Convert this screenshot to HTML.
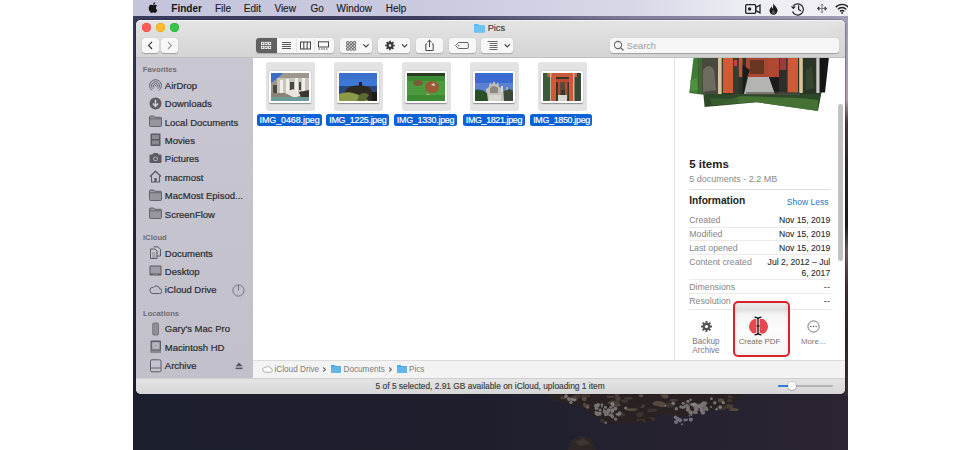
<!DOCTYPE html>
<html><head><meta charset="utf-8"><style>
html,body{margin:0;padding:0;}
body{width:980px;height:450px;position:relative;overflow:hidden;background:#fff;font-family:"Liberation Sans", sans-serif;}
.t{position:absolute;white-space:nowrap;font-family:"Liberation Sans", sans-serif;}
</style></head><body>
<div style="position:absolute;left:133px;top:0px;width:715px;height:450px;background:linear-gradient(90deg,#1c1f2e 0%,#1d1f2d 45%,#262230 75%,#2c2430 100%);"></div><svg style="position:absolute;left:133px;top:380px;" width="715" height="70" viewBox="0 0 715 70"><defs><filter id="bl" x="-20%" y="-20%" width="140%" height="140%"><feGaussianBlur stdDeviation="0.7"/></filter></defs><g transform="translate(-133,-380)" filter="url(#bl)"><path d="M548 394 L552 400 L566 404 L580 406 L592 414 L604 422 L622 424 L644 422 L660 414 L686 416 L714 410 L734 404 L742 394z" fill="#2a2422"/><ellipse cx="610.9" cy="396.7" rx="4.6" ry="1.1" fill="#4a3e38"/><ellipse cx="618.7" cy="395.0" rx="4.0" ry="1.1" fill="#2a2422"/><ellipse cx="628.6" cy="398.3" rx="4.2" ry="1.1" fill="#4a3e38"/><ellipse cx="728.1" cy="405.4" rx="4.3" ry="1.1" fill="#2a2422"/><ellipse cx="559.3" cy="398.0" rx="4.2" ry="1.3" fill="#2a2422"/><ellipse cx="577.1" cy="396.1" rx="3.2" ry="2.6" fill="#3e3430"/><ellipse cx="585.3" cy="395.8" rx="4.8" ry="2.1" fill="#3e3430"/><ellipse cx="643.3" cy="403.6" rx="5.1" ry="1.9" fill="#2a2422"/><ellipse cx="618.0" cy="398.5" rx="2.7" ry="2.6" fill="#4a3e38"/><ellipse cx="658.0" cy="403.5" rx="5.5" ry="2.5" fill="#56483f"/><ellipse cx="664.5" cy="395.3" rx="4.0" ry="1.3" fill="#56483f"/><ellipse cx="693.7" cy="404.3" rx="5.5" ry="1.6" fill="#56483f"/><ellipse cx="661.7" cy="404.4" rx="3.8" ry="2.7" fill="#56483f"/><ellipse cx="639.1" cy="406.0" rx="2.2" ry="2.4" fill="#2a2422"/><ellipse cx="603.5" cy="400.9" rx="4.7" ry="1.0" fill="#2a2422"/><ellipse cx="616.8" cy="405.0" rx="4.0" ry="1.4" fill="#56483f"/><ellipse cx="574.3" cy="398.5" rx="3.6" ry="2.7" fill="#4a3e38"/><ellipse cx="581.3" cy="401.2" rx="3.1" ry="1.3" fill="#2a2422"/><ellipse cx="712.4" cy="399.0" rx="3.7" ry="1.7" fill="#2a2422"/><ellipse cx="730.1" cy="396.7" rx="2.7" ry="1.5" fill="#3e3430"/><ellipse cx="584.3" cy="399.1" rx="2.6" ry="2.1" fill="#56483f"/><ellipse cx="729.2" cy="406.4" rx="4.1" ry="2.2" fill="#4a3e38"/><ellipse cx="635.8" cy="409.7" rx="5.8" ry="2.4" fill="#2a2422"/><ellipse cx="624.8" cy="401.1" rx="3.9" ry="1.8" fill="#3e3430"/><ellipse cx="562.7" cy="397.8" rx="2.6" ry="1.7" fill="#4a3e38"/><ellipse cx="650.9" cy="411.1" rx="4.5" ry="1.1" fill="#3e3430"/><ellipse cx="665.4" cy="396.7" rx="3.0" ry="1.7" fill="#56483f"/><ellipse cx="639.1" cy="396.1" rx="4.0" ry="3.0" fill="#2a2422"/><ellipse cx="641.0" cy="395.5" rx="2.4" ry="1.7" fill="#56483f"/><ellipse cx="640.0" cy="406.5" rx="4.1" ry="1.4" fill="#56483f"/><ellipse cx="734.0" cy="409.5" rx="4.8" ry="1.5" fill="#56483f"/><ellipse cx="720.8" cy="400.4" rx="2.9" ry="2.1" fill="#56483f"/><ellipse cx="669.7" cy="405.0" rx="5.2" ry="2.5" fill="#3e3430"/><ellipse cx="701.5" cy="408.7" rx="5.0" ry="1.5" fill="#2a2422"/><ellipse cx="616.8" cy="394.5" rx="2.1" ry="1.6" fill="#56483f"/><ellipse cx="586.4" cy="404.9" rx="3.4" ry="2.6" fill="#56483f"/><ellipse cx="729.5" cy="400.6" rx="2.9" ry="1.5" fill="#3e3430"/><ellipse cx="613.5" cy="402.7" rx="5.9" ry="2.2" fill="#4a3e38"/><ellipse cx="640.1" cy="405.8" rx="5.2" ry="1.2" fill="#4a3e38"/><ellipse cx="721.0" cy="408.1" rx="5.0" ry="2.0" fill="#3e3430"/><ellipse cx="631.6" cy="405.4" rx="2.3" ry="2.9" fill="#2a2422"/><ellipse cx="637.1" cy="407.4" rx="2.3" ry="1.3" fill="#3e3430"/><ellipse cx="637.5" cy="405.8" rx="4.4" ry="2.2" fill="#2a2422"/><ellipse cx="673.6" cy="400.3" rx="4.2" ry="1.3" fill="#4a3e38"/><ellipse cx="700.3" cy="407.1" rx="2.4" ry="2.5" fill="#3e3430"/><ellipse cx="631.6" cy="409.7" rx="5.3" ry="1.4" fill="#56483f"/><ellipse cx="590.0" cy="403.0" rx="5.1" ry="1.7" fill="#2a2422"/><ellipse cx="649.2" cy="408.9" rx="3.7" ry="1.9" fill="#2a2422"/><ellipse cx="648.8" cy="420.3" rx="1.9" ry="1.2" fill="#3e3430"/><ellipse cx="651.7" cy="418.9" rx="3.3" ry="1.8" fill="#3e3430"/><ellipse cx="606.2" cy="414.6" rx="3.7" ry="1.6" fill="#2a2422"/><ellipse cx="639.4" cy="415.4" rx="2.9" ry="1.8" fill="#3e3430"/><ellipse cx="611.2" cy="411.9" rx="3.8" ry="1.5" fill="#3e3430"/><ellipse cx="644.4" cy="420.8" rx="2.8" ry="1.6" fill="#3e3430"/><ellipse cx="640.0" cy="414.3" rx="3.1" ry="1.5" fill="#3e3430"/><ellipse cx="640.4" cy="420.3" rx="4.3" ry="1.3" fill="#3e3430"/><ellipse cx="649.6" cy="409.9" rx="1.9" ry="1.4" fill="#3e3430"/><ellipse cx="638.6" cy="414.0" rx="2.1" ry="1.3" fill="#3e3430"/><ellipse cx="653.3" cy="410.2" rx="3.6" ry="1.7" fill="#3e3430"/><ellipse cx="611.5" cy="409.9" rx="2.9" ry="1.7" fill="#3e3430"/><ellipse cx="620.9" cy="414.8" rx="4.5" ry="1.8" fill="#3e3430"/><ellipse cx="640.9" cy="421.9" rx="2.7" ry="1.4" fill="#2a2422"/><ellipse cx="615.7" cy="418.1" rx="1.6" ry="1.6" fill="#2a2422"/><ellipse cx="640.7" cy="413.4" rx="3.1" ry="1.3" fill="#3e3430"/><ellipse cx="602.3" cy="420.9" rx="2.2" ry="1.9" fill="#3e3430"/><ellipse cx="612.3" cy="408.6" rx="3.8" ry="1.3" fill="#3e3430"/><ellipse cx="648.3" cy="419.9" rx="3.5" ry="1.9" fill="#2a2422"/><g fill="#b4b0b4" opacity="0.55"><circle cx="615.6" cy="419.1" r="1.6"/><circle cx="603.9" cy="409.1" r="0.9"/><circle cx="601.8" cy="406.6" r="0.9"/><circle cx="615.5" cy="408.6" r="1.9"/><circle cx="618.6" cy="415.5" r="0.9"/><circle cx="610.7" cy="407.2" r="1.3"/><circle cx="587.7" cy="407.6" r="1.2"/><circle cx="611.7" cy="415.0" r="1.1"/><circle cx="608.7" cy="412.7" r="0.9"/><circle cx="607.1" cy="414.7" r="1.2"/><circle cx="605.4" cy="407.3" r="1.5"/><circle cx="608.2" cy="414.7" r="0.8"/><circle cx="605.0" cy="411.8" r="1.8"/><circle cx="600.1" cy="410.1" r="1.5"/><circle cx="608.5" cy="410.1" r="1.9"/><circle cx="596.5" cy="413.2" r="2.0"/><circle cx="597.6" cy="414.3" r="1.8"/><circle cx="612.3" cy="410.5" r="2.0"/><circle cx="601.9" cy="404.8" r="1.4"/><circle cx="603.5" cy="412.2" r="1.0"/><circle cx="616.9" cy="414.2" r="1.2"/><circle cx="606.7" cy="412.6" r="2.0"/><circle cx="613.2" cy="406.1" r="1.2"/><circle cx="605.3" cy="414.7" r="1.4"/><circle cx="609.8" cy="415.1" r="1.2"/><circle cx="625.8" cy="408.1" r="1.6"/><circle cx="605.7" cy="422.7" r="1.2"/><circle cx="604.8" cy="411.2" r="1.3"/><circle cx="595.7" cy="411.8" r="1.1"/><circle cx="604.2" cy="411.0" r="1.2"/><circle cx="611.8" cy="413.4" r="0.9"/><circle cx="611.7" cy="411.5" r="1.1"/><circle cx="596.6" cy="408.2" r="1.9"/><circle cx="598.0" cy="405.0" r="2.0"/><circle cx="599.5" cy="413.6" r="2.2"/><circle cx="612.6" cy="416.8" r="1.7"/><circle cx="619.6" cy="413.3" r="2.0"/><circle cx="595.9" cy="405.7" r="1.9"/><circle cx="611.2" cy="415.2" r="1.5"/><circle cx="612.4" cy="404.0" r="2.0"/><circle cx="673.3" cy="403.3" r="1.8"/><circle cx="693.7" cy="404.6" r="0.8"/><circle cx="705.2" cy="409.5" r="0.9"/><circle cx="705.5" cy="403.2" r="1.7"/><circle cx="683.2" cy="403.2" r="1.5"/><circle cx="720.2" cy="407.1" r="1.8"/><circle cx="680.9" cy="406.9" r="1.7"/><circle cx="716.4" cy="409.3" r="1.2"/><circle cx="706.1" cy="408.2" r="1.8"/><circle cx="702.9" cy="412.5" r="2.2"/><circle cx="684.2" cy="407.1" r="1.5"/><circle cx="688.0" cy="401.5" r="1.7"/><circle cx="693.7" cy="405.9" r="1.0"/><circle cx="696.5" cy="412.8" r="1.2"/><circle cx="695.1" cy="406.8" r="0.9"/><circle cx="694.7" cy="412.2" r="1.8"/><circle cx="692.1" cy="404.4" r="1.5"/><circle cx="682.8" cy="407.9" r="1.0"/><circle cx="703.8" cy="405.6" r="2.2"/><circle cx="699.2" cy="406.7" r="1.4"/><circle cx="711.5" cy="398.7" r="1.4"/><circle cx="696.0" cy="409.4" r="2.1"/><circle cx="701.2" cy="411.5" r="1.0"/><circle cx="665.2" cy="405.7" r="1.0"/><circle cx="703.6" cy="403.2" r="2.0"/><circle cx="694.3" cy="404.6" r="2.1"/><circle cx="694.1" cy="407.1" r="0.8"/><circle cx="682.8" cy="407.2" r="1.2"/><circle cx="704.6" cy="409.5" r="1.2"/><circle cx="697.4" cy="406.8" r="1.9"/><circle cx="700.5" cy="405.5" r="2.1"/><circle cx="690.6" cy="399.7" r="1.2"/><circle cx="688.0" cy="409.5" r="2.2"/><circle cx="686.6" cy="405.2" r="1.4"/><circle cx="696.4" cy="408.1" r="0.9"/><circle cx="702.4" cy="404.5" r="2.1"/><circle cx="697.0" cy="409.8" r="1.5"/><circle cx="701.6" cy="410.1" r="2.1"/><circle cx="714.8" cy="402.7" r="1.7"/><circle cx="723.4" cy="402.7" r="1.6"/><circle cx="696.2" cy="405.9" r="1.8"/><circle cx="676.3" cy="408.8" r="1.7"/><circle cx="696.1" cy="408.1" r="2.1"/><circle cx="707.2" cy="409.8" r="1.3"/><circle cx="690.7" cy="412.5" r="2.2"/><circle cx="695.8" cy="412.1" r="1.2"/><circle cx="684.8" cy="405.8" r="1.0"/><circle cx="701.7" cy="409.0" r="2.1"/><circle cx="687.8" cy="407.0" r="2.1"/><circle cx="711.2" cy="406.9" r="1.0"/><circle cx="684.7" cy="419.8" r="1.3"/><circle cx="686.8" cy="419.8" r="1.2"/><circle cx="675.5" cy="417.2" r="1.8"/><circle cx="680.0" cy="420.1" r="1.5"/><circle cx="681.1" cy="420.3" r="0.9"/><circle cx="682.0" cy="424.2" r="1.0"/><circle cx="677.7" cy="418.9" r="2.0"/><circle cx="684.8" cy="420.6" r="1.1"/><circle cx="680.0" cy="420.3" r="2.1"/><circle cx="689.3" cy="415.7" r="0.8"/><circle cx="690.9" cy="419.6" r="2.1"/><circle cx="678.1" cy="419.4" r="0.8"/><circle cx="676.0" cy="421.9" r="2.0"/><circle cx="691.4" cy="414.8" r="1.1"/><circle cx="571.8" cy="399.5" r="1.5"/><circle cx="566.1" cy="395.7" r="1.8"/><circle cx="565.9" cy="397.0" r="1.4"/><circle cx="568.9" cy="398.9" r="1.9"/><circle cx="571.0" cy="402.4" r="1.7"/><circle cx="569.3" cy="399.7" r="1.2"/><circle cx="565.9" cy="397.2" r="1.0"/><circle cx="574.4" cy="399.8" r="1.6"/></g><path d="M568 450 L571 441 L580 436 L591 438 L596 450z" fill="#2e2826"/><path d="M574 442 L584 438 L590 444 L580 446z" fill="#3e3430"/></g></svg><div style="position:absolute;left:133px;top:16px;width:715px;height:6px;background:linear-gradient(90deg,#393b5c 0%,#3e4062 40%,#7f7d9a 70%,#a09db5 100%);"></div><div style="position:absolute;left:844px;top:16px;width:4px;height:380px;background:linear-gradient(180deg,#a09eb6 0%,#b09cac 22%,#4a3a3a 28%,#2e2424 40%,#1e1a1a 55%,#6a5866 62%,#3a2c30 72%,#2e2428 85%,#3a2e36 100%);"></div><div style="position:absolute;left:133px;top:16px;width:4px;height:380px;background:linear-gradient(180deg,#393b5c 0%,#2a2c46 30%,#1c1e30 100%);"></div><div style="position:absolute;left:133px;top:0px;width:715px;height:16px;background:linear-gradient(90deg,#c4c5dc 0%,#c9cade 40%,#d8d8e8 70%,#ececf3 85%,#f0f0f5 100%);"></div><svg style="position:absolute;left:145px;top:1px;" width="14" height="15" viewBox="0 0 14 15"><g transform="translate(2.77,0.72) scale(0.58)"><path d="M14.1 10.6c-0.02-2.3 1.9-3.4 2-3.5c-1.1-1.6-2.8-1.8-3.4-1.8c-1.4-0.15-2.8 0.85-3.5 0.85c-0.7 0-1.85-0.83-3.05-0.8c-1.55 0.02-3 0.9-3.8 2.3c-1.6 2.8-0.4 7 1.2 9.3c0.8 1.1 1.7 2.4 2.9 2.35c1.15-0.05 1.6-0.75 3-0.75c1.4 0 1.8 0.75 3.05 0.72c1.25-0.02 2.05-1.15 2.8-2.27c0.9-1.3 1.25-2.55 1.27-2.6c-0.03-0.01-2.45-0.94-2.47-3.75z M11.8 3.9c0.63-0.77 1.06-1.83 0.94-2.9c-0.91 0.04-2.02 0.61-2.67 1.37c-0.59 0.67-1.1 1.76-0.96 2.8c1.02 0.08 2.05-0.52 2.69-1.27z" fill="#151515"/></g></svg><div class="t" style="left:171.3px;top:3.84px;font-size:10px;line-height:10px;color:#151515;font-weight:700;letter-spacing:0px;">Finder</div><div class="t" style="left:215px;top:3.84px;font-size:10px;line-height:10px;color:#1e1e1e;font-weight:400;letter-spacing:0px;-webkit-text-stroke:0.15px #1e1e1e;">File</div><div class="t" style="left:243.8px;top:3.84px;font-size:10px;line-height:10px;color:#1e1e1e;font-weight:400;letter-spacing:0px;-webkit-text-stroke:0.15px #1e1e1e;">Edit</div><div class="t" style="left:274.4px;top:3.84px;font-size:10px;line-height:10px;color:#1e1e1e;font-weight:400;letter-spacing:0px;-webkit-text-stroke:0.15px #1e1e1e;">View</div><div class="t" style="left:310.5px;top:3.84px;font-size:10px;line-height:10px;color:#1e1e1e;font-weight:400;letter-spacing:0px;-webkit-text-stroke:0.15px #1e1e1e;">Go</div><div class="t" style="left:336.5px;top:3.84px;font-size:10px;line-height:10px;color:#1e1e1e;font-weight:400;letter-spacing:0px;-webkit-text-stroke:0.15px #1e1e1e;">Window</div><div class="t" style="left:385.8px;top:3.84px;font-size:10px;line-height:10px;color:#1e1e1e;font-weight:400;letter-spacing:0px;-webkit-text-stroke:0.15px #1e1e1e;">Help</div><svg style="position:absolute;left:745px;top:4px;" width="16" height="10" viewBox="0 0 16 10"><rect x="0.7" y="0.7" width="10" height="8.6" rx="1" fill="none" stroke="#222" stroke-width="1.3"/><circle cx="4.6" cy="5" r="1.7" fill="#222"/><path d="M10.7 3.5 L15 1.2 V8.8 L10.7 6.5z" fill="none" stroke="#222" stroke-width="1.3"/></svg><svg style="position:absolute;left:769px;top:3px;" width="9" height="12" viewBox="0 0 9 12"><path d="M4.5 0.3 C5 2.5 8.5 4.5 8.5 7.8 C8.5 10.2 6.7 11.7 4.5 11.7 C2.3 11.7 0.5 10.2 0.5 7.8 C0.5 5.8 2 4.5 2.8 3.4 C3 4.8 3.5 5.5 4 5.8 C4 4 4.2 2 4.5 0.3z" fill="#1a1a1a"/><path d="M4.5 6.5 C5.5 7.5 6.3 8.3 6.3 9.5 C6.3 10.5 5.5 11.1 4.5 11.1 C3.5 11.1 2.7 10.5 2.7 9.5 C2.7 8.5 3.6 7.6 4.5 6.5z" fill="#555"/></svg><svg style="position:absolute;left:790px;top:2px;" width="15" height="14" viewBox="0 0 15 14"><path d="M3.2 4.2 A5.6 5.6 0 1 1 2.5 9.5" fill="none" stroke="#222" stroke-width="1.2"/><path d="M0.8 4.5 L3.4 7.2 L5.8 4.5z" fill="#222"/><path d="M8.6 3.5 V7.5 L11 9" fill="none" stroke="#222" stroke-width="1.2"/></svg><svg style="position:absolute;left:817px;top:3px;" width="10" height="11" viewBox="0 0 10 11"><path d="M5 1 V10 M1 5.5 H9" stroke="#777" stroke-width="1"/><path d="M3.8 2.3 L5 1 L6.2 2.3 M3.8 8.7 L5 10 L6.2 8.7" fill="none" stroke="#888" stroke-width="1"/><path d="M2.3 4 L0.8 5.5 L2.3 7 M7.7 4 L9.2 5.5 L7.7 7" fill="none" stroke="#333" stroke-width="1.3"/></svg><svg style="position:absolute;left:835px;top:3px;" width="13" height="11" viewBox="0 0 13 11"><path d="M0.8 4.2 A8.5 8.5 0 0 1 13.5 4.2" fill="none" stroke="#222" stroke-width="1.4"/><path d="M2.9 6.4 A5.6 5.6 0 0 1 11.2 6.4" fill="none" stroke="#222" stroke-width="1.4"/><path d="M5 8.5 A2.6 2.6 0 0 1 9.2 8.5" fill="none" stroke="#222" stroke-width="1.4"/><circle cx="7.1" cy="10" r="0.9" fill="#222"/></svg><div style="position:absolute;left:136px;top:20px;width:709px;height:374px;border-radius:5px;background:#fff;box-shadow:0 0 0 0.6px rgba(20,20,30,0.45);"></div><div style="position:absolute;left:136px;top:58px;width:117px;height:320px;background:linear-gradient(180deg,#c7c6d1 0%,#c4c3ce 50%,#c2c1cb 100%);"></div><div style="position:absolute;left:253px;top:58px;width:421px;height:302px;background:#fff;"></div><div style="position:absolute;left:674px;top:58px;width:171px;height:302px;background:#fff;border-left:1px solid #e2e2e2;box-sizing:border-box;"></div><div style="position:absolute;left:253px;top:360px;width:592px;height:18px;background:#f3f3f3;border-top:1px solid #dcdcdc;box-sizing:border-box;"></div><div style="position:absolute;left:136px;top:378px;width:709px;height:16px;background:linear-gradient(180deg,#e4e4e4 0%,#d6d6d6 100%);border-top:1px solid #cfcfcf;box-sizing:border-box;border-radius:0 0 5px 5px;"></div><div style="position:absolute;left:136px;top:20px;width:709px;height:38px;background:radial-gradient(ellipse 70px 22px at 760px 12px,rgba(215,180,160,0.35),rgba(215,180,160,0)),linear-gradient(180deg,#e4e4e4 0%,#dcdcdc 50%,#d4d4d4 100%);border-bottom:1px solid #c0c0c0;box-shadow:inset 0 1px 0 rgba(255,255,255,0.6);box-sizing:border-box;border-radius:5px 5px 0 0;"></div><div style="position:absolute;left:141.8px;top:23.0px;width:9.4px;height:9.4px;border-radius:50%;background:#fc5c55;box-shadow:inset 0 0 0 0.5px #de4640;"></div><div style="position:absolute;left:155.9px;top:23.0px;width:9.4px;height:9.4px;border-radius:50%;background:#fdbb2e;box-shadow:inset 0 0 0 0.5px #dd9f22;"></div><div style="position:absolute;left:169.9px;top:23.0px;width:9.4px;height:9.4px;border-radius:50%;background:#33c748;box-shadow:inset 0 0 0 0.5px #27a83a;"></div><div style="position:absolute;left:142.3px;top:38px;width:17px;height:14.8px;background:#f7f7f7;border-radius:3px;box-shadow:0 0.5px 0.8px rgba(0,0,0,0.25);"></div><div style="position:absolute;left:161px;top:38px;width:16.7px;height:14.8px;background:#f7f7f7;border-radius:3px;box-shadow:0 0.5px 0.8px rgba(0,0,0,0.25);"></div><svg style="position:absolute;left:142.3px;top:38px;" width="17" height="15" viewBox="0 0 17 15"><path d="M10 3.8 L6.6 7.4 L10 11" fill="none" stroke="#3a3a3a" stroke-width="1.2"/></svg><svg style="position:absolute;left:161px;top:38px;" width="17" height="15" viewBox="0 0 17 15"><path d="M7 3.8 L10.4 7.4 L7 11" fill="none" stroke="#9a9a9a" stroke-width="1.2"/></svg><svg style="position:absolute;left:473.7px;top:24.3px;" width="11" height="8.5" viewBox="0 0 11 8.5"><path d="M0 1.2 Q0 0 1.2 0 H4 L5 1.3 H9.8 Q11 1.3 11 2.5 V7.3 Q11 8.5 9.8 8.5 H1.2 Q0 8.5 0 7.3z" fill="#5bb8f0"/><rect x="0" y="2.2" width="11" height="6.3" rx="1" fill="#6ec3f5"/></svg><div class="t" style="left:487.7px;top:24.21px;font-size:9.2px;line-height:9.2px;color:#3a3a3a;font-weight:400;letter-spacing:0px;-webkit-text-stroke:0.15px #3a3a3a;">Pics</div><div style="position:absolute;left:256.3px;top:37.8px;width:77.4px;height:15px;background:#f7f7f7;border-radius:3px;box-shadow:0 0.5px 1px rgba(0,0,0,0.2);"></div><div style="position:absolute;left:256.3px;top:37.8px;width:20.3px;height:15px;background:#606060;border-radius:3px 0 0 3px;"></div><div style="position:absolute;left:295.7px;top:38.8px;width:0.6px;height:13px;background:#e4e4e4;"></div><div style="position:absolute;left:314.3px;top:38.8px;width:0.6px;height:13px;background:#e4e4e4;"></div><svg style="position:absolute;left:256.3px;top:37.8px;" width="20" height="15" viewBox="0 0 20 15"><g fill="none" stroke="#f4f4f4" stroke-width="0.9"><rect x="5.5" y="4.3" width="2.2" height="2.2"/><rect x="9" y="4.3" width="2.2" height="2.2"/><rect x="12.5" y="4.3" width="2.2" height="2.2"/><rect x="5.5" y="8.3" width="2.2" height="2.2"/><rect x="9" y="8.3" width="2.2" height="2.2"/><rect x="12.5" y="8.3" width="2.2" height="2.2"/></g></svg><svg style="position:absolute;left:276.6px;top:37.8px;" width="19" height="15" viewBox="0 0 19 15"><g stroke="#444" stroke-width="0.9"><path d="M5 4.5 H14 M5 6.5 H14 M5 8.5 H14 M5 10.5 H14"/></g></svg><svg style="position:absolute;left:295.7px;top:37.8px;" width="19" height="15" viewBox="0 0 19 15"><g fill="none" stroke="#444" stroke-width="1"><rect x="4.5" y="4" width="10" height="7"/><path d="M7.8 4 V11 M11.2 4 V11"/></g></svg><svg style="position:absolute;left:314.3px;top:37.8px;" width="19" height="15" viewBox="0 0 19 15"><g fill="none" stroke="#444" stroke-width="1"><rect x="4.5" y="3.8" width="10" height="5.2"/><path d="M4.5 11 H14.5" stroke-dasharray="1.5 1"/></g></svg><div style="position:absolute;left:340px;top:37.8px;width:32px;height:15px;background:#f7f7f7;border-radius:3px;box-shadow:0 0.5px 1px rgba(0,0,0,0.2);"></div><svg style="position:absolute;left:340px;top:37.8px;" width="32" height="15" viewBox="0 0 32 15"><g fill="none" stroke="#4e4e4e" stroke-width="0.9"><rect x="6.6" y="3.6" width="2.4" height="2.4" rx="0.5"/><rect x="9.9" y="3.6" width="2.4" height="2.4" rx="0.5"/><rect x="13.2" y="3.6" width="2.4" height="2.4" rx="0.5"/><rect x="6.6" y="6.7" width="2.4" height="2.4" rx="0.5"/><rect x="9.9" y="6.7" width="2.4" height="2.4" rx="0.5"/><rect x="13.2" y="6.7" width="2.4" height="2.4" rx="0.5"/><rect x="6.6" y="9.8" width="2.4" height="2.4" rx="0.5"/><rect x="9.9" y="9.8" width="2.4" height="2.4" rx="0.5"/><rect x="13.2" y="9.8" width="2.4" height="2.4" rx="0.5"/></g><path d="M23.3 6.3 L26 9 L28.7 6.3" fill="none" stroke="#444" stroke-width="1.2"/></svg><div style="position:absolute;left:378px;top:37.8px;width:32px;height:15px;background:#f7f7f7;border-radius:3px;box-shadow:0 0.5px 1px rgba(0,0,0,0.2);"></div><svg style="position:absolute;left:378px;top:37.8px;" width="32" height="15" viewBox="0 0 32 15"><g transform="translate(12,7.5)"><circle r="3.4" fill="#3a3a3a"/><g stroke="#3a3a3a" stroke-width="1.7"><path d="M0 -4.8 V4.8 M-4.8 0 H4.8 M-3.4 -3.4 L3.4 3.4 M-3.4 3.4 L3.4 -3.4"/></g><circle r="1.2" fill="#f8f8f8"/></g><path d="M24 6.3 L26.6 9 L29.2 6.3" fill="none" stroke="#444" stroke-width="1.2"/></svg><div style="position:absolute;left:416.3px;top:37.8px;width:26.6px;height:15px;background:#f7f7f7;border-radius:3px;box-shadow:0 0.5px 1px rgba(0,0,0,0.2);"></div><svg style="position:absolute;left:416.3px;top:37.8px;" width="27" height="15" viewBox="0 0 27 15"><g fill="none" stroke="#444" stroke-width="1"><path d="M11 6 H9.8 V12.5 H17.2 V6 H16"/><path d="M13.5 2.2 V9 M11.3 4.3 L13.5 2.2 L15.7 4.3"/></g></svg><div style="position:absolute;left:449px;top:37.8px;width:26.7px;height:15px;background:#f7f7f7;border-radius:3px;box-shadow:0 0.5px 1px rgba(0,0,0,0.2);"></div><svg style="position:absolute;left:449px;top:37.8px;" width="27" height="15" viewBox="0 0 27 15"><path d="M9.5 4.5 H18 Q19.3 4.5 19.3 5.8 V9.2 Q19.3 10.5 18 10.5 H9.5 L6.5 7.5z" fill="none" stroke="#555" stroke-width="0.9"/><circle cx="9.6" cy="7.5" r="0.7" fill="#555"/></svg><div style="position:absolute;left:481.4px;top:37.8px;width:32px;height:15px;background:#f7f7f7;border-radius:3px;box-shadow:0 0.5px 1px rgba(0,0,0,0.2);"></div><svg style="position:absolute;left:481.4px;top:38px;" width="32" height="15" viewBox="0 0 32 15"><g stroke="#5a5a5a" stroke-width="0.9"><path d="M6.6 3.5 H16.6 M8.6 5.5 H16.6 M8.6 7.5 H16.6 M8.6 9.5 H16.6 M8.6 11.5 H16.6"/></g><path d="M23.6 6.3 L26.2 9 L28.8 6.3" fill="none" stroke="#444" stroke-width="1.2"/></svg><div style="position:absolute;left:610.2px;top:38.2px;width:229px;height:14.8px;background:#f6f6f6;border-radius:3px;box-shadow:0 0.5px 0.8px rgba(0,0,0,0.25);"></div><svg style="position:absolute;left:613px;top:39.5px;" width="12" height="12" viewBox="0 0 12 12"><circle cx="5" cy="5" r="3.6" fill="none" stroke="#666" stroke-width="1.1"/><path d="M7.6 7.6 L10.5 10.5" stroke="#666" stroke-width="1.2"/></svg><div class="t" style="left:626.8px;top:41.51px;font-size:9.2px;line-height:9.2px;color:#9c9c9c;font-weight:400;letter-spacing:0px;">Search</div><div class="t" style="left:142.8px;top:66.32px;font-size:7.65px;line-height:7.65px;color:#6d6c74;font-weight:700;letter-spacing:0px;">Favorites</div><div class="t" style="left:143px;top:233.62px;font-size:7.65px;line-height:7.65px;color:#6d6c74;font-weight:700;letter-spacing:0px;">iCloud</div><div class="t" style="left:143px;top:309.62px;font-size:7.65px;line-height:7.65px;color:#6d6c74;font-weight:700;letter-spacing:0px;">Locations</div><svg style="position:absolute;left:149px;top:78.60000000000001px;" width="13" height="14" viewBox="0 0 13 14"><path d="M3.12 11.43 A5.90 5.90 0 1 1 9.88 11.43 M4.26 9.79 A3.90 3.90 0 1 1 8.74 9.79 M5.35 8.24 A2.00 2.00 0 1 1 7.65 8.24" fill="none" stroke="#5c5b63" stroke-width="0.95"/><circle cx="6.5" cy="6.6" r="0.7" fill="#5c5b63"/></svg><div class="t" style="left:164.8px;top:81.16px;font-size:9.5px;line-height:9.5px;color:#2b2b30;font-weight:400;letter-spacing:0px;-webkit-text-stroke:0.2px #2b2b30;">AirDrop</div><svg style="position:absolute;left:149px;top:96.9px;" width="13" height="14" viewBox="0 0 13 14"><circle cx="6.5" cy="6.5" r="6" fill="#5c5b63"/><path d="M6.5 2.8 V8.8 M3.8 6.5 L6.5 9.3 L9.2 6.5" fill="none" stroke="#cfcfd8" stroke-width="1.5"/></svg><div class="t" style="left:164.8px;top:99.46px;font-size:9.5px;line-height:9.5px;color:#2b2b30;font-weight:400;letter-spacing:0px;-webkit-text-stroke:0.2px #2b2b30;">Downloads</div><svg style="position:absolute;left:149px;top:115.2px;" width="13" height="14" viewBox="0 0 13 14"><path d="M0.5 2 Q0.5 1 1.5 1 H4.8 L6 2.3 H11.5 Q12.5 2.3 12.5 3.3 V10.5 Q12.5 11.5 11.5 11.5 H1.5 Q0.5 11.5 0.5 10.5z" fill="#97969f" stroke="#5c5b63" stroke-width="0.9"/><path d="M0.5 3.8 H12.5" stroke="#5c5b63" stroke-width="0.8"/></svg><div class="t" style="left:164.8px;top:117.76px;font-size:9.5px;line-height:9.5px;color:#2b2b30;font-weight:400;letter-spacing:0px;-webkit-text-stroke:0.2px #2b2b30;">Local Documents</div><svg style="position:absolute;left:149px;top:133.20000000000002px;" width="13" height="14" viewBox="0 0 13 14"><rect x="1.5" y="0.5" width="10" height="12.5" rx="1" fill="#5c5b63"/><rect x="3" y="2" width="7" height="4" fill="#8c8b94"/><rect x="3" y="7.5" width="7" height="4" fill="#8c8b94"/></svg><div class="t" style="left:164.8px;top:135.76px;font-size:9.5px;line-height:9.5px;color:#2b2b30;font-weight:400;letter-spacing:0px;-webkit-text-stroke:0.2px #2b2b30;">Movies</div><svg style="position:absolute;left:149px;top:151.8px;" width="13" height="14" viewBox="0 0 13 14"><path d="M0.5 3.5 Q0.5 2.5 1.5 2.5 H3.5 L4.5 1 H8.5 L9.5 2.5 H11.5 Q12.5 2.5 12.5 3.5 V10 Q12.5 11 11.5 11 H1.5 Q0.5 11 0.5 10z" fill="#5c5b63"/><circle cx="6.5" cy="6.8" r="2.4" fill="#b8b7c2"/><circle cx="6.5" cy="6.8" r="1.5" fill="#5c5b63"/></svg><div class="t" style="left:164.8px;top:154.36px;font-size:9.5px;line-height:9.5px;color:#2b2b30;font-weight:400;letter-spacing:0px;-webkit-text-stroke:0.2px #2b2b30;">Pictures</div><svg style="position:absolute;left:149px;top:170.1px;" width="13" height="14" viewBox="0 0 13 14"><path d="M1 6.5 L6.5 1.2 L12 6.5" fill="none" stroke="#5c5b63" stroke-width="1.2"/><path d="M2.5 5.5 V12 H10.5 V5.5" fill="none" stroke="#5c5b63" stroke-width="1.1"/><rect x="5.3" y="8" width="2.4" height="4" fill="#5c5b63"/></svg><div class="t" style="left:164.8px;top:172.66px;font-size:9.5px;line-height:9.5px;color:#2b2b30;font-weight:400;letter-spacing:0px;-webkit-text-stroke:0.2px #2b2b30;">macmost</div><svg style="position:absolute;left:149px;top:188.70000000000002px;" width="13" height="14" viewBox="0 0 13 14"><path d="M0.5 2 Q0.5 1 1.5 1 H4.8 L6 2.3 H11.5 Q12.5 2.3 12.5 3.3 V10.5 Q12.5 11.5 11.5 11.5 H1.5 Q0.5 11.5 0.5 10.5z" fill="#97969f" stroke="#5c5b63" stroke-width="0.9"/><path d="M0.5 3.8 H12.5" stroke="#5c5b63" stroke-width="0.8"/></svg><div class="t" style="left:164.8px;top:191.26px;font-size:9.5px;line-height:9.5px;color:#2b2b30;font-weight:400;letter-spacing:0px;-webkit-text-stroke:0.2px #2b2b30;">MacMost Episod...</div><svg style="position:absolute;left:149px;top:207.20000000000002px;" width="13" height="14" viewBox="0 0 13 14"><path d="M0.5 2 Q0.5 1 1.5 1 H4.8 L6 2.3 H11.5 Q12.5 2.3 12.5 3.3 V10.5 Q12.5 11.5 11.5 11.5 H1.5 Q0.5 11.5 0.5 10.5z" fill="#97969f" stroke="#5c5b63" stroke-width="0.9"/><path d="M0.5 3.8 H12.5" stroke="#5c5b63" stroke-width="0.8"/></svg><div class="t" style="left:164.8px;top:209.76px;font-size:9.5px;line-height:9.5px;color:#2b2b30;font-weight:400;letter-spacing:0px;-webkit-text-stroke:0.2px #2b2b30;">ScreenFlow</div><svg style="position:absolute;left:149px;top:246.00000000000003px;" width="13" height="14" viewBox="0 0 13 14"><path d="M1.5 3 H6 L8 5 V12.5 H1.5z" fill="#c8c7d1" stroke="#5c5b63" stroke-width="1"/><path d="M4.5 0.8 H9 L11.5 3.3 V10 H8" fill="none" stroke="#5c5b63" stroke-width="1"/><path d="M3 7 H6.5 M3 9 H6.5 M3 11 H6.5" stroke="#5c5b63" stroke-width="0.6"/></svg><div class="t" style="left:164.8px;top:248.56px;font-size:9.5px;line-height:9.5px;color:#2b2b30;font-weight:400;letter-spacing:0px;-webkit-text-stroke:0.2px #2b2b30;">Documents</div><svg style="position:absolute;left:149px;top:264.4px;" width="13" height="14" viewBox="0 0 13 14"><rect x="0.5" y="1.5" width="12" height="10" rx="1.2" fill="#5c5b63"/><rect x="1.5" y="2.5" width="10" height="7" fill="#9d9ca6"/><path d="M4 10.5 H9" stroke="#b8b7c2" stroke-width="0.6" stroke-dasharray="0.8 0.8"/></svg><div class="t" style="left:164.8px;top:266.96px;font-size:9.5px;line-height:9.5px;color:#2b2b30;font-weight:400;letter-spacing:0px;-webkit-text-stroke:0.2px #2b2b30;">Desktop</div><svg style="position:absolute;left:149px;top:282.79999999999995px;" width="13" height="14" viewBox="0 0 13 14"><path d="M3.2 10.5 H10.5 A2.4 2.4 0 0 0 10.6 5.7 A3.2 3.2 0 0 0 4.6 4.6 A2.6 2.6 0 0 0 1 7.5 A3 3 0 0 0 3.2 10.5z" fill="none" stroke="#5c5b63" stroke-width="1"/></svg><div class="t" style="left:164.8px;top:285.36px;font-size:9.5px;line-height:9.5px;color:#2b2b30;font-weight:400;letter-spacing:0px;-webkit-text-stroke:0.2px #2b2b30;">iCloud Drive</div><svg style="position:absolute;left:149px;top:321.79999999999995px;" width="13" height="14" viewBox="0 0 13 14"><rect x="3.2" y="0.5" width="6.8" height="13" rx="2" fill="#77767e"/><rect x="4.2" y="1.5" width="4.8" height="11" rx="1.5" fill="#8e8d95"/></svg><div class="t" style="left:164.8px;top:324.36px;font-size:9.5px;line-height:9.5px;color:#2b2b30;font-weight:400;letter-spacing:0px;-webkit-text-stroke:0.2px #2b2b30;">Gary's Mac Pro</div><svg style="position:absolute;left:149px;top:340.4px;" width="13" height="14" viewBox="0 0 13 14"><rect x="1.5" y="0.5" width="10.5" height="12.5" rx="1" fill="#5c5b63"/><rect x="2.8" y="2" width="8" height="7.5" fill="#a9a8b2"/><circle cx="6.8" cy="5.7" r="2.2" fill="none" stroke="#d0d0d8" stroke-width="0.7"/><rect x="1.5" y="10.5" width="10.5" height="2.5" fill="#8a8990"/></svg><div class="t" style="left:164.8px;top:342.96px;font-size:9.5px;line-height:9.5px;color:#2b2b30;font-weight:400;letter-spacing:0px;-webkit-text-stroke:0.2px #2b2b30;">Macintosh HD</div><svg style="position:absolute;left:149px;top:358.79999999999995px;" width="13" height="14" viewBox="0 0 13 14"><rect x="1.5" y="0.8" width="10.5" height="12" rx="1.4" fill="#c5c4ce" stroke="#5c5b63" stroke-width="1"/><path d="M1.8 9 H11.7" stroke="#5c5b63" stroke-width="0.9"/></svg><div class="t" style="left:164.8px;top:361.36px;font-size:9.5px;line-height:9.5px;color:#2b2b30;font-weight:400;letter-spacing:0px;-webkit-text-stroke:0.2px #2b2b30;">Archive</div><svg style="position:absolute;left:231.5px;top:284px;" width="13" height="13" viewBox="0 0 13 13"><circle cx="6.5" cy="6.5" r="5.6" fill="none" stroke="#6d6c74" stroke-width="0.9"/><path d="M6.5 1 V6.5" stroke="#6d6c74" stroke-width="0.9"/></svg><svg style="position:absolute;left:235px;top:362px;" width="8" height="8" viewBox="0 0 8 8"><path d="M0.5 4.2 L4 0.5 L7.5 4.2z" fill="#55545c"/><rect x="0.5" y="5.6" width="7" height="1.5" fill="#55545c"/></svg><div style="position:absolute;left:265.7px;top:62.3px;width:49px;height:49px;background:#e3e3e3;border-radius:2.5px;"></div><div style="position:absolute;left:269.4px;top:71.1px;width:41.4px;height:31.5px;background:#fff;border-radius:1.5px;box-shadow:0 0.3px 1.2px rgba(0,0,0,0.4);"></div><svg style="position:absolute;left:271.2px;top:72.8px;" width="38" height="28" viewBox="0 0 38 28"><defs><filter id="tb0"><feGaussianBlur stdDeviation="0.6"/></filter></defs><g filter="url(#tb0)"><rect width="38" height="28" fill="#9c988e"/><path d="M0 0 H12 L8 4 L0 10z" fill="#3d6cc8"/><rect x="6" y="5" width="32" height="16" fill="#c8c4ba"/><g fill="#f0eee8"><rect x="9" y="7" width="3" height="13"/><rect x="15" y="6" width="3" height="14"/><rect x="24" y="5" width="3" height="15"/><rect x="31" y="5" width="3" height="15"/></g><g fill="#4a4640"><rect x="19" y="9" width="4" height="8"/><rect x="28" y="9" width="2" height="8"/><rect x="2" y="12" width="4" height="8"/></g><path d="M0 20 H38 V24 H0z" fill="#8a8478"/><path d="M14 20 L22 16 L30 22 L24 25z" fill="#e8e4dc"/><path d="M28 19 L38 17 V25 L30 24z" fill="#3a3630"/><rect y="24" width="38" height="4" fill="#6e9a98"/></g></svg><div style="position:absolute;left:256.8px;top:114.4px;width:65.5px;height:11.2px;background:#0b61d6;border-radius:2.5px;"></div><div class="t" style="left:89.57499999999999px;width:400px;text-align:center;top:115.77px;font-size:8.9px;line-height:8.9px;color:#fff;font-weight:400;letter-spacing:-0.05px;-webkit-text-stroke:0.2px #fff;">IMG_0468.jpeg</div><div style="position:absolute;left:333.7px;top:62.3px;width:49px;height:49px;background:#e3e3e3;border-radius:2.5px;"></div><div style="position:absolute;left:337.4px;top:71.1px;width:41.4px;height:31.5px;background:#fff;border-radius:1.5px;box-shadow:0 0.3px 1.2px rgba(0,0,0,0.4);"></div><svg style="position:absolute;left:339.2px;top:72.8px;" width="38" height="28" viewBox="0 0 38 28"><defs><filter id="tb1"><feGaussianBlur stdDeviation="0.6"/></filter></defs><g filter="url(#tb1)"><rect width="38" height="28" fill="#3c78d6"/><rect y="0" width="38" height="6" fill="#3a70cc"/><rect y="13" width="38" height="12" fill="#2a4a7a"/><path d="M4 24 Q6 14 14 13 L22 12 L30 14 Q34 18 36 26 L36 28 H0z" fill="#2e2c24"/><rect x="20" y="9" width="3" height="4" fill="#1e2230"/><path d="M0 28 V21 Q8 18 14 20 Q22 22 30 28z" fill="#8a9a48"/><path d="M20 22 Q26 18 30 22 L26 28 H18z" fill="#5a6a34"/><rect x="33" y="19" width="5" height="9" fill="#1a1e18"/></g></svg><div style="position:absolute;left:326.4px;top:114.4px;width:62.5px;height:11.2px;background:#0b61d6;border-radius:2.5px;"></div><div class="t" style="left:157.78999999999996px;width:400px;text-align:center;top:115.77px;font-size:8.9px;line-height:8.9px;color:#fff;font-weight:400;letter-spacing:-0.28px;-webkit-text-stroke:0.2px #fff;">IMG_1225.jpeg</div><div style="position:absolute;left:401.7px;top:62.3px;width:49px;height:49px;background:#e3e3e3;border-radius:2.5px;"></div><div style="position:absolute;left:405.4px;top:71.1px;width:41.4px;height:31.5px;background:#fff;border-radius:1.5px;box-shadow:0 0.3px 1.2px rgba(0,0,0,0.4);"></div><svg style="position:absolute;left:407.2px;top:72.8px;" width="38" height="28" viewBox="0 0 38 28"><defs><filter id="tb2"><feGaussianBlur stdDeviation="0.6"/></filter></defs><g filter="url(#tb2)"><rect width="38" height="28" fill="#4c9a3c"/><rect y="0" width="38" height="3" fill="#2a3a26"/><rect y="3" width="38" height="5" fill="#3e8a34"/><ellipse cx="11" cy="10" rx="5" ry="3" fill="#7a5a3a"/><ellipse cx="25" cy="14" rx="7" ry="6" fill="#9a5a34"/><path d="M24 12 L27 10 L28 13z" fill="#e8e0d0"/><path d="M20 20 L24 22 L18 24z" fill="#b89a6a"/><rect y="22" width="38" height="6" fill="#3e8a36"/></g></svg><div style="position:absolute;left:393.9px;top:114.4px;width:63.0px;height:11.2px;background:#0b61d6;border-radius:2.5px;"></div><div class="t" style="left:225.52499999999998px;width:400px;text-align:center;top:115.77px;font-size:8.9px;line-height:8.9px;color:#fff;font-weight:400;letter-spacing:-0.25px;-webkit-text-stroke:0.2px #fff;">IMG_1330.jpeg</div><div style="position:absolute;left:469.7px;top:62.3px;width:49px;height:49px;background:#e3e3e3;border-radius:2.5px;"></div><div style="position:absolute;left:473.4px;top:71.1px;width:41.4px;height:31.5px;background:#fff;border-radius:1.5px;box-shadow:0 0.3px 1.2px rgba(0,0,0,0.4);"></div><svg style="position:absolute;left:475.2px;top:72.8px;" width="38" height="28" viewBox="0 0 38 28"><defs><filter id="tb3"><feGaussianBlur stdDeviation="0.6"/></filter></defs><g filter="url(#tb3)"><rect width="38" height="28" fill="#3a6ad0"/><rect y="10" width="38" height="8" fill="#5a80d0"/><path d="M10 28 L11 16 L14 14 L15 9 L17 12 L19 8 L21 12 L23 9 L24 14 L28 16 L29 28z" fill="#c4c2ba"/><path d="M15 15 Q19 11 23 15 L23 20 L15 20z" fill="#8a8880"/><rect x="26" y="13" width="2" height="6" fill="#d8d6d0"/><rect x="31" y="14" width="2" height="6" fill="#a8a8b0"/><path d="M0 17 Q6 15 12 20 L13 28 H0z" fill="#2a5028"/><path d="M29 18 L35 16 L38 18 V28 H29z" fill="#3a4a3a"/><rect x="14" y="22" width="12" height="6" fill="#d8d6cc"/></g></svg><div style="position:absolute;left:462.9px;top:114.4px;width:61.700000000000045px;height:11.2px;background:#0b61d6;border-radius:2.5px;"></div><div class="t" style="left:293.925px;width:400px;text-align:center;top:115.77px;font-size:8.9px;line-height:8.9px;color:#fff;font-weight:400;letter-spacing:-0.35px;-webkit-text-stroke:0.2px #fff;">IMG_1821.jpeg</div><div style="position:absolute;left:537.7px;top:62.3px;width:49px;height:49px;background:#e3e3e3;border-radius:2.5px;"></div><div style="position:absolute;left:541.4000000000001px;top:71.1px;width:41.4px;height:31.5px;background:#fff;border-radius:1.5px;box-shadow:0 0.3px 1.2px rgba(0,0,0,0.4);"></div><svg style="position:absolute;left:543.2px;top:72.8px;" width="38" height="28" viewBox="0 0 38 28"><defs><filter id="tb4"><feGaussianBlur stdDeviation="0.6"/></filter></defs><g filter="url(#tb4)"><rect width="38" height="28" fill="#2e3a2c"/><rect x="0" y="0" width="8" height="28" fill="#3a5a3a"/><rect x="30" y="0" width="8" height="28" fill="#3a4a38"/><rect x="4" y="0" width="30" height="4" fill="#c85a3a"/><rect x="9" y="3" width="4" height="25" fill="#d2583a"/><rect x="26" y="3" width="4" height="25" fill="#d2583a"/><rect x="13" y="6" width="13" height="3" fill="#c04a30"/><rect x="15" y="8" width="2.5" height="18" fill="#b84a30"/><rect x="22" y="8" width="2.5" height="18" fill="#b84a30"/><rect x="17.5" y="9" width="4.5" height="8" fill="#5a4a3a"/><rect x="15" y="22" width="9" height="6" fill="#d8d4d0"/><rect x="7" y="0" width="1.5" height="28" fill="#c8b89a"/><rect x="30" y="0" width="1.5" height="28" fill="#c8b89a"/></g></svg><div style="position:absolute;left:530.3px;top:114.4px;width:62.200000000000045px;height:11.2px;background:#0b61d6;border-radius:2.5px;"></div><div class="t" style="left:361.54999999999995px;width:400px;text-align:center;top:115.77px;font-size:8.9px;line-height:8.9px;color:#fff;font-weight:400;letter-spacing:-0.3px;-webkit-text-stroke:0.2px #fff;">IMG_1850.jpeg</div><svg style="position:absolute;left:675px;top:58px;" width="163" height="60" viewBox="0 0 163 60"><defs><filter id="pb" x="-5%" y="-5%" width="110%" height="110%"><feGaussianBlur stdDeviation="0.5"/></filter></defs><g transform="translate(-675,-58)" filter="url(#pb)"><path d="M703 90 L822 90 L818 111 L757 102.2 L704.6 107z" fill="#2f4a2a"/><path d="M740 96 L800 98 L818 100 L818 111 L757 102.2 L720 104z" fill="#4a7a3a" opacity="0.8"/><path d="M710 98 L740 99 L735 104 L712 105z" fill="#3a6030" opacity="0.8"/><path d="M693.6 57 L705 57 L705 95 L689.3 93z" fill="#3e7a34"/><path d="M690 80 L697 78 L698 90 L691 91z" fill="#5a9a48" opacity="0.7"/><path d="M815 57 L829 57 L825 92.5 L815 92.5z" fill="#161816"/><rect x="698.5" y="57" width="120" height="37" fill="#2c3428"/><rect x="698.5" y="57" width="4" height="37" fill="#3a6a30"/><rect x="702" y="57" width="16" height="37" fill="#4a4a40"/><path d="M703 70 Q709 62 714 70 L716 90 L703 92z" fill="#6e6c60"/><rect x="718" y="57" width="3.7" height="37" fill="#d8c49a"/><rect x="722.9" y="57" width="10.4" height="36" fill="#cf5a36"/><rect x="733.3" y="57" width="5.5" height="37" fill="#3a3a36"/><rect x="734" y="60" width="3" height="6" fill="#c84048"/><rect x="738.8" y="57" width="3.7" height="20" fill="#b85a36"/><rect x="746" y="57" width="22" height="20" fill="#a84630"/><rect x="750" y="60" width="14" height="14" fill="#6a3424"/><path d="M742.5 94 L742.5 65 L750 70 L746 80 L744 94z" fill="#1e1e1c"/><path d="M744 94 L748 77 L769 77 L775 94z" fill="#b4b4b2"/><path d="M769 65 L780 77 L782 94 L775 94 L769 77z" fill="#1e1e1c"/><rect x="768" y="57" width="11" height="20" fill="#b04a30"/><rect x="779" y="57" width="8.6" height="37" fill="#2e2e2a"/><rect x="779.6" y="57" width="6.7" height="13" fill="#9a3a40"/><rect x="787.6" y="57" width="10.4" height="35.5" fill="#cf5a36"/><rect x="799.2" y="57" width="3.6" height="36" fill="#d8c49a"/><rect x="803" y="57" width="13.3" height="37" fill="#2a3626"/><path d="M806 70 L812 66 L814 88 L806 90z" fill="#3a4a34" opacity="0.8"/><rect x="816.3" y="57" width="3.2" height="36" fill="#c8c8c4"/><path d="M746 92 L800 92 L800 95 L746 95z" fill="#505048" opacity="0.6"/></g></svg><div style="position:absolute;left:838.2px;top:103.6px;width:5px;height:157.4px;background:#c2c2c2;border-radius:2.5px;"></div><div class="t" style="left:689.2px;top:158.97px;font-size:11.5px;line-height:11.5px;color:#1c1c1c;font-weight:700;letter-spacing:0px;">5 items</div><div class="t" style="left:689.2px;top:175.48px;font-size:9px;line-height:9px;color:#8a8a8a;font-weight:400;letter-spacing:0px;">5 documents - 2.2 MB</div><div style="position:absolute;left:689px;top:189px;width:141.5px;height:1px;background:#e0e0e0;"></div><div class="t" style="left:689.2px;top:196.17px;font-size:10.2px;line-height:10.2px;color:#1c1c1c;font-weight:700;letter-spacing:0px;">Information</div><div class="t" style="left:428.4px;width:400px;text-align:right;top:197.60px;font-size:8.5px;line-height:8.5px;color:#2a73c4;font-weight:400;letter-spacing:0px;">Show Less</div><div class="t" style="left:689.2px;top:216.05px;font-size:8.8px;line-height:8.8px;color:#858585;font-weight:400;letter-spacing:0px;">Created</div><div class="t" style="left:430.20000000000005px;width:400px;text-align:right;top:216.22px;font-size:8.6px;line-height:8.6px;color:#2a2a2a;font-weight:400;letter-spacing:0px;-webkit-text-stroke:0.1px #2a2a2a;">Nov 15, 2019</div><div style="position:absolute;left:689px;top:226.8px;width:141.5px;height:1px;background:#ebebeb;"></div><div class="t" style="left:689.2px;top:229.55px;font-size:8.8px;line-height:8.8px;color:#858585;font-weight:400;letter-spacing:0px;">Modified</div><div class="t" style="left:430.20000000000005px;width:400px;text-align:right;top:229.72px;font-size:8.6px;line-height:8.6px;color:#2a2a2a;font-weight:400;letter-spacing:0px;-webkit-text-stroke:0.1px #2a2a2a;">Nov 15, 2019</div><div style="position:absolute;left:689px;top:240.2px;width:141.5px;height:1px;background:#ebebeb;"></div><div class="t" style="left:689.2px;top:244.15px;font-size:8.8px;line-height:8.8px;color:#858585;font-weight:400;letter-spacing:0px;">Last opened</div><div class="t" style="left:430.20000000000005px;width:400px;text-align:right;top:244.32px;font-size:8.6px;line-height:8.6px;color:#2a2a2a;font-weight:400;letter-spacing:0px;-webkit-text-stroke:0.1px #2a2a2a;">Nov 15, 2019</div><div style="position:absolute;left:689px;top:254.4px;width:141.5px;height:1px;background:#ebebeb;"></div><div class="t" style="left:689.2px;top:258.15px;font-size:8.8px;line-height:8.8px;color:#858585;font-weight:400;letter-spacing:0px;">Content created</div><div class="t" style="left:430.20000000000005px;width:400px;text-align:right;top:258.32px;font-size:8.6px;line-height:8.6px;color:#2a2a2a;font-weight:400;letter-spacing:0px;-webkit-text-stroke:0.1px #2a2a2a;">Jul 2, 2012 – Jul</div><div class="t" style="left:430.20000000000005px;width:400px;text-align:right;top:268.72px;font-size:8.6px;line-height:8.6px;color:#2a2a2a;font-weight:400;letter-spacing:0px;-webkit-text-stroke:0.1px #2a2a2a;">6, 2017</div><div style="position:absolute;left:689px;top:279.4px;width:141.5px;height:1px;background:#ebebeb;"></div><div class="t" style="left:689.2px;top:282.75px;font-size:8.8px;line-height:8.8px;color:#858585;font-weight:400;letter-spacing:0px;">Dimensions</div><div class="t" style="left:430.20000000000005px;width:400px;text-align:right;top:282.75px;font-size:8.8px;line-height:8.8px;color:#2a2a2a;font-weight:400;letter-spacing:0.3px;">--</div><div style="position:absolute;left:689px;top:293.2px;width:141.5px;height:1px;background:#ebebeb;"></div><div class="t" style="left:689.2px;top:296.75px;font-size:8.8px;line-height:8.8px;color:#858585;font-weight:400;letter-spacing:0px;">Resolution</div><div class="t" style="left:430.20000000000005px;width:400px;text-align:right;top:296.75px;font-size:8.8px;line-height:8.8px;color:#2a2a2a;font-weight:400;letter-spacing:0.3px;">--</div><div style="position:absolute;left:689px;top:308.5px;width:141.5px;height:1px;background:#e6e6e6;"></div><svg style="position:absolute;left:699.5px;top:319.5px;" width="13" height="13" viewBox="0 0 13 13"><g transform="translate(6.5,6.5)"><circle r="3.8" fill="#555"/><g stroke="#555" stroke-width="2"><path d="M0 -5.5 V5.5 M-5.5 0 H5.5 M-3.9 -3.9 L3.9 3.9 M-3.9 3.9 L3.9 -3.9"/></g><circle r="1.6" fill="#fff"/></g></svg><div class="t" style="left:506px;width:400px;text-align:center;top:337.56px;font-size:8.2px;line-height:8.2px;color:#7a7a7a;font-weight:400;letter-spacing:0px;">Backup</div><div class="t" style="left:506px;width:400px;text-align:center;top:347.16px;font-size:8.2px;line-height:8.2px;color:#7a7a7a;font-weight:400;letter-spacing:0px;">Archive</div><div style="position:absolute;left:732.8px;top:301px;width:57px;height:56px;border:2px solid #d8232c;border-radius:5px;box-sizing:border-box;background:linear-gradient(180deg,#f2f2f2 0%,#dedede 12%,#f4f4f4 22%,#fcfcfc 50%,#f8f8f8 100%);box-shadow:inset 0 0 5px rgba(0,0,0,0.07);"></div><div style="position:absolute;left:748.7px;top:318px;width:19.3px;height:16.8px;border-radius:50%;background:#e9474f;"></div><svg style="position:absolute;left:750.7px;top:315px;" width="14" height="22" viewBox="0 0 14 22"><g fill="none" stroke="#fff" stroke-width="3.2" stroke-linecap="round" opacity="0.9"><path d="M3.5 2.2 Q7 2.2 7 4.6 Q7 2.2 10.5 2.2"/><path d="M7 4.6 V17.4"/><path d="M3.5 19.8 Q7 19.8 7 17.4 Q7 19.8 10.5 19.8"/></g><g fill="none" stroke="#111" stroke-width="1.3"><path d="M3.5 2.2 Q7 2.2 7 4.6 Q7 2.2 10.5 2.2"/><path d="M7 4.6 V17.4"/><path d="M3.5 19.8 Q7 19.8 7 17.4 Q7 19.8 10.5 19.8"/><path d="M5.6 11 H8.4"/></g></svg><div class="t" style="left:559.5px;width:400px;text-align:center;top:337.81px;font-size:7.9px;line-height:7.9px;color:#707070;font-weight:400;letter-spacing:0px;">Create PDF</div><svg style="position:absolute;left:807px;top:320px;" width="13" height="13" viewBox="0 0 13 13"><circle cx="6.5" cy="6.5" r="5.6" fill="none" stroke="#666" stroke-width="0.9"/><circle cx="3.9" cy="6.5" r="0.75" fill="#555"/><circle cx="6.5" cy="6.5" r="0.75" fill="#555"/><circle cx="9.1" cy="6.5" r="0.75" fill="#555"/></svg><div class="t" style="left:613.2px;width:400px;text-align:center;top:337.81px;font-size:7.9px;line-height:7.9px;color:#7a7a7a;font-weight:400;letter-spacing:0px;">More...</div><svg style="position:absolute;left:261.5px;top:364px;" width="11" height="9" viewBox="0 0 11 9"><path d="M2.6 8.2 H8.4 A1.9 1.9 0 0 0 8.5 4.4 A2.6 2.6 0 0 0 3.7 3.5 A2.1 2.1 0 0 0 0.8 5.8 A2.4 2.4 0 0 0 2.6 8.2z" fill="#fafafa" stroke="#a0a0a0" stroke-width="0.8"/></svg><div class="t" style="left:274.5px;top:365.66px;font-size:8.2px;line-height:8.2px;color:#7c7c7c;font-weight:400;letter-spacing:0px;">iCloud Drive</div><svg style="position:absolute;left:322px;top:366px;" width="5" height="7" viewBox="0 0 5 7"><path d="M1.2 1.5 L3.4 3.5 L1.2 5.5" fill="none" stroke="#6a6a6a" stroke-width="1.1"/></svg><svg style="position:absolute;left:330.6px;top:364.5px;" width="10" height="8" viewBox="0 0 10 8"><path d="M0 1 Q0 0 1 0 H3.6 L4.5 1 H9 Q10 1 10 2 V7 Q10 8 9 8 H1 Q0 8 0 7z" fill="#4aa6dc"/><rect x="0" y="2" width="10" height="6" rx="0.8" fill="#62b6e8"/></svg><div class="t" style="left:343.5px;top:365.66px;font-size:8.2px;line-height:8.2px;color:#7c7c7c;font-weight:400;letter-spacing:0px;">Documents</div><svg style="position:absolute;left:387.5px;top:366px;" width="5" height="7" viewBox="0 0 5 7"><path d="M1.2 1.5 L3.4 3.5 L1.2 5.5" fill="none" stroke="#6a6a6a" stroke-width="1.1"/></svg><svg style="position:absolute;left:396.5px;top:364.5px;" width="10" height="8" viewBox="0 0 10 8"><path d="M0 1 Q0 0 1 0 H3.6 L4.5 1 H9 Q10 1 10 2 V7 Q10 8 9 8 H1 Q0 8 0 7z" fill="#4aa6dc"/><rect x="0" y="2" width="10" height="6" rx="0.8" fill="#62b6e8"/></svg><div class="t" style="left:409px;top:365.66px;font-size:8.2px;line-height:8.2px;color:#7c7c7c;font-weight:400;letter-spacing:0px;">Pics</div><div class="t" style="left:375.6px;top:382.09px;font-size:8.4px;line-height:8.4px;color:#3c3c3c;font-weight:400;letter-spacing:0px;-webkit-text-stroke:0.15px #3c3c3c;">5 of 5 selected, 2.91 GB available on iCloud, uploading 1 item</div><div style="position:absolute;left:777.8px;top:385.4px;width:55.5px;height:2px;background:#b4b4b4;border-radius:1px;"></div><div style="position:absolute;left:777.8px;top:385.4px;width:14px;height:2px;background:#2f7ce0;border-radius:1px;"></div><div style="position:absolute;left:788.2px;top:382.4px;width:8px;height:8px;border-radius:50%;background:#fff;box-shadow:0 0 0 0.5px rgba(0,0,0,0.2),0 0.5px 1px rgba(0,0,0,0.3);"></div>
</body></html>
